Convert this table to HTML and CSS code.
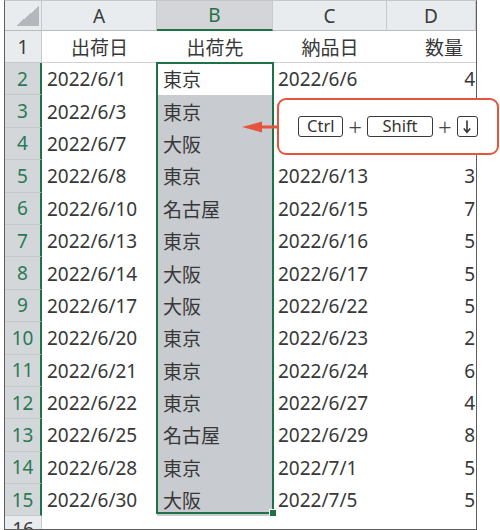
FILE: index.html
```html
<!DOCTYPE html>
<html lang="ja">
<head>
    <meta charset="UTF-8">
    <meta name="viewport" content="width=device-width, initial-scale=1.0">
    <title>出荷表</title>
    <link rel="stylesheet" href="styles.css">
</head>
<body>
    <div class="wrap">
        <div class="sheet">
            <div class="row head">
                <div class="cell ch corner"></div>
                <div class="cell ch">A</div>
                <div class="cell ch sel">B</div>
                <div class="cell ch">C</div>
                <div class="cell ch">D</div>
            </div>
            <div class="row first">
                <div class="cell rh">1</div>
                <div class="cell title">出荷日</div>
                <div class="cell title">出荷先</div>
                <div class="cell title">納品日</div>
                <div class="cell title right">数量</div>
            </div>
            <div class="row">
                <div class="cell rh sel">2</div>
                <div class="cell">2022/6/1</div>
                <div class="cell colb">東京</div>
                <div class="cell">2022/6/6</div>
                <div class="cell num">4</div>
            </div>
            <!-- C3:D4 sit under the callout -->
            <div class="row">
                <div class="cell rh sel">3</div>
                <div class="cell">2022/6/3</div>
                <div class="cell colb fill">東京</div>
                <div class="cell"></div>
                <div class="cell num"></div>
            </div>
            <div class="row">
                <div class="cell rh sel">4</div>
                <div class="cell">2022/6/7</div>
                <div class="cell colb fill">大阪</div>
                <div class="cell"></div>
                <div class="cell num"></div>
            </div>
            <div class="row">
                <div class="cell rh sel">5</div>
                <div class="cell">2022/6/8</div>
                <div class="cell colb fill">東京</div>
                <div class="cell">2022/6/13</div>
                <div class="cell num">3</div>
            </div>
            <div class="row">
                <div class="cell rh sel">6</div>
                <div class="cell">2022/6/10</div>
                <div class="cell colb fill">名古屋</div>
                <div class="cell">2022/6/15</div>
                <div class="cell num">7</div>
            </div>
            <div class="row">
                <div class="cell rh sel">7</div>
                <div class="cell">2022/6/13</div>
                <div class="cell colb fill">東京</div>
                <div class="cell">2022/6/16</div>
                <div class="cell num">5</div>
            </div>
            <div class="row">
                <div class="cell rh sel">8</div>
                <div class="cell">2022/6/14</div>
                <div class="cell colb fill">大阪</div>
                <div class="cell">2022/6/17</div>
                <div class="cell num">5</div>
            </div>
            <div class="row">
                <div class="cell rh sel">9</div>
                <div class="cell">2022/6/17</div>
                <div class="cell colb fill">大阪</div>
                <div class="cell">2022/6/22</div>
                <div class="cell num">5</div>
            </div>
            <div class="row">
                <div class="cell rh sel">10</div>
                <div class="cell">2022/6/20</div>
                <div class="cell colb fill">東京</div>
                <div class="cell">2022/6/23</div>
                <div class="cell num">2</div>
            </div>
            <div class="row">
                <div class="cell rh sel">11</div>
                <div class="cell">2022/6/21</div>
                <div class="cell colb fill">東京</div>
                <div class="cell">2022/6/24</div>
                <div class="cell num">6</div>
            </div>
            <div class="row">
                <div class="cell rh sel">12</div>
                <div class="cell">2022/6/22</div>
                <div class="cell colb fill">東京</div>
                <div class="cell">2022/6/27</div>
                <div class="cell num">4</div>
            </div>
            <div class="row">
                <div class="cell rh sel">13</div>
                <div class="cell">2022/6/25</div>
                <div class="cell colb fill">名古屋</div>
                <div class="cell">2022/6/29</div>
                <div class="cell num">8</div>
            </div>
            <div class="row">
                <div class="cell rh sel">14</div>
                <div class="cell">2022/6/28</div>
                <div class="cell colb fill">東京</div>
                <div class="cell">2022/7/1</div>
                <div class="cell num">5</div>
            </div>
            <div class="row">
                <div class="cell rh sel">15</div>
                <div class="cell">2022/6/30</div>
                <div class="cell colb fill">大阪</div>
                <div class="cell">2022/7/5</div>
                <div class="cell num">5</div>
            </div>
            <div class="row last">
                <div class="cell rh">16</div>
                <div class="cell"></div>
                <div class="cell"></div>
                <div class="cell"></div>
                <div class="cell"></div>
            </div>

            <!-- range B2:B15 -->
            <div class="selection"></div>
        </div>

        <svg class="arrow" width="40" height="16" viewBox="0 0 40 16">
            <polygon points="2,8 22,2.5 22,13.5" fill="#e5553d"/>
            <rect x="20" y="6.5" width="19" height="3" fill="#e5553d"/>
        </svg>

        <div class="callout">
            <span class="key ctrl">Ctrl</span>
            <span class="plus">+</span>
            <span class="key shift">Shift</span>
            <span class="plus">+</span>
            <span class="key down">
                <svg width="10" height="15" viewBox="0 0 10 15">
                    <line x1="5" y1="1.5" x2="5" y2="13" stroke="#333" stroke-width="1.6"/>
                    <polyline points="1.8,9.5 5,13.2 8.2,9.5" fill="none" stroke="#333" stroke-width="1.6"/>
                </svg>
            </span>
        </div>
    </div>
</body>
</html>
```

FILE: styles.css
```css
body{
    margin: 0;
    background-color: #ffffff;
}

.wrap{
    position: relative;
    width: 500px;
    height: 530px;
    overflow: hidden;
}

.sheet{
    position: relative;
    width: 473px;
    height: 530px;
    margin-left: 4px;
    border: 1px solid #5e5e5e;
    border-top-color: #c4c7cb;
    box-sizing: border-box;
    overflow: hidden;
    font-family: "Noto Sans", "Noto Sans CJK JP", sans-serif;
    font-size: 19px;
    color: #383838;
}

.row{
    display: grid;
    grid-template-columns: 37px 115px 116px 114px 89px;
    height: 32.4px;
}
.row.head{
    height: 30px;
}
.row.first{
    height: 32px;
}
.row.last{
    height: 24px;
}

.cell{
    display: flex;
    align-items: center;
    padding: 0 5px;
    white-space: nowrap;
    box-sizing: border-box;
}

/* column headers */
.ch{
    justify-content: center;
    background-color: #e9ecef;
    border-right: 1px solid #c6c9cd;
    border-bottom: 1px solid #b8bbbf;
    color: #3a3a3a;
}
.ch.sel{
    background-color: #d3d5d8;
    color: #1f7148;
    border-bottom: 2px solid #1f7148;
}
.corner{
    background-image: linear-gradient(to bottom right, transparent 50%, #b4b8bc 50%);
    background-size: 23px 20px;
    background-position: right 2px bottom 4px;
    background-repeat: no-repeat;
}

/* row headers */
.rh{
    justify-content: center;
    padding: 0;
    background-color: #e9ecef;
    border-right: 1px solid #c6c9cd;
    border-bottom: 1px solid #c6c9cd;
    color: #3a3a3a;
}
.rh.sel{
    background-color: #d4d7da;
    color: #2a7a55;
    border-right: 2px solid #1f7148;
}

.title{
    justify-content: center;
    border-bottom: 1px solid #cfd1d4;
}
.title.right{
    justify-content: flex-end;
    padding-right: 13px;
}

.colb{
    padding-left: 6px;
}
.fill{
    background-color: #c8cbcf;
}

.num{
    justify-content: flex-end;
    padding-right: 1px;
}

.selection{
    position: absolute;
    left: 151px;
    top: 61px;
    width: 118px;
    height: 452px;
    border: 2px solid #1f7148;
    box-sizing: border-box;
}
.selection::after{
    content: "";
    position: absolute;
    right: -5px;
    bottom: -5px;
    width: 6px;
    height: 6px;
    background-color: #1f7148;
    border: 1px solid #ffffff;
}

/* shortcut callout */
.arrow{
    position: absolute;
    left: 240px;
    top: 119px;
}

.callout{
    position: absolute;
    left: 277px;
    top: 98px;
    width: 222px;
    height: 57px;
    box-sizing: border-box;
    border: 2px solid #e5553d;
    border-radius: 9px;
    background-color: #ffffff;
    display: flex;
    align-items: center;
    justify-content: center;
    gap: 5px;
    font-family: "Noto Sans", sans-serif;
    color: #333333;
}

.key{
    display: flex;
    align-items: center;
    justify-content: center;
    height: 21px;
    box-sizing: border-box;
    border: 1.5px solid #3a3a3a;
    border-radius: 3px;
    font-size: 16.5px;
    line-height: 1;
}
.ctrl{
    width: 45px;
}
.shift{
    width: 66px;
}
.down{
    width: 21px;
}

.plus{
    font-size: 24px;
    line-height: 1;
    font-weight: 300;
    color: #444444;
}
```
